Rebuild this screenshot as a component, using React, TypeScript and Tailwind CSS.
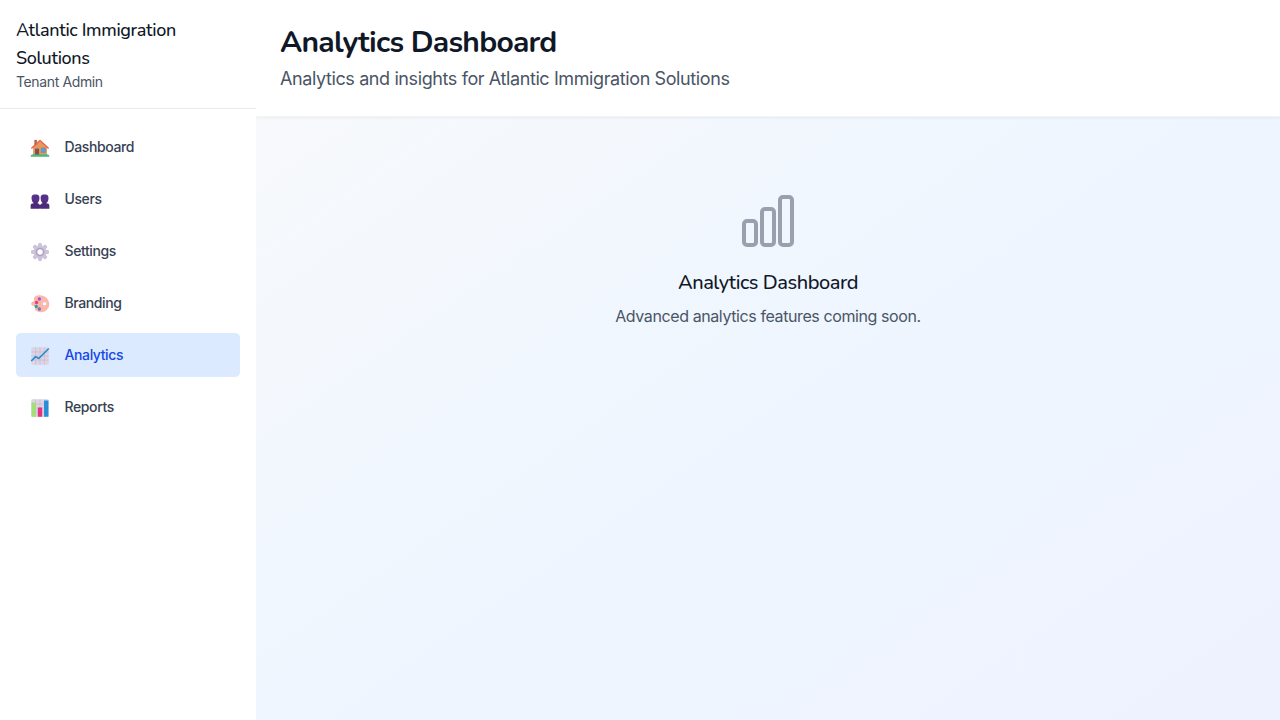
import type { ReactNode } from "react";

const HEADING = "font-['Nunito',sans-serif]";

function Emoji({ children }: { children: ReactNode }) {
  return (
    <svg viewBox="0 0 32 32" className="mt-px h-5 w-5 shrink-0" aria-hidden="true">
      {children}
    </svg>
  );
}

function House() {
  return (
    <Emoji>
      <rect x="7" y="3" width="4" height="9" fill="#a56953" />
      <path d="M5 15 16 5l11 10v14H5Z" fill="#dd9a62" />
      <path d="M3 16 16 4l13 12" fill="none" stroke="#ef5f40" strokeWidth="2.500" strokeLinecap="round" strokeLinejoin="round" />
      <rect x="18" y="16" width="7" height="7" fill="#3fa6ef" stroke="#b7795b" />
      <path d="M1 30c0-3 2-4 4-4h22c2 0 4 1 4 4Z" fill="#48ba83" />
      <rect x="8" y="17" width="6.5" height="9.500" fill="#85514c" />
    </Emoji>
  );
}

function People() {
  return (
    <Emoji>
      <path d="M1 30v-5c0-3 2-4 5-4h5c3 0 4.500 1 4.500 4v5ZM16.500 30v-5c0-3 2-4 4.500-4h5c3 0 5 1 5 4v5Z" fill="#4b2a7a" />
      <path d="M2.500 13c0-5 2-6 6.300-6s6.300 1 6.300 6-2 8-6.300 8-6.300-3-6.300-8ZM17 13c0-5 2-6 6.300-6s6.300 1 6.300 6-2 8-6.300 8S17 18 17 13Z" fill="#56318a" />
      <path d="M6 18h6v5H6ZM20 18h6v5h-6ZM13 24h6v5h-6Z" fill="#4b2a7a" />
    </Emoji>
  );
}

function Gear() {
  const teeth = [0, 45, 90, 135, 180, 225, 270, 315];
  return (
    <Emoji>
      <g fill="#cdc4db">
        {teeth.map((angle) => (
          <path key={angle} d="m12.500 7 .7-5q2.800-1 5.600 0l.7 5Z" transform={`rotate(${angle} 16 16)`} />
        ))}
        <circle cx="16" cy="16" r="10.500" />
      </g>
      <circle cx="16" cy="16" r="5.700" fill="#fff" stroke="#ada1c2" strokeWidth="2.600" />
    </Emoji>
  );
}

function Palette() {
  return (
    <Emoji>
      <path d="M7 5C13 0 23 2 28 8c4 6 4 13-1 17-3 3-6 4-10 4-4 0-8-2-10-5 3-1 2-4 0-5-3 0-5-1-5-3 0-2 1-4 3-4 3 0 0-4 2-7Z" fill="#f8b9aa" />
      <rect x="20.500" y="13" width="5.500" height="5" rx="2" fill="#fff" />
      <circle cx="15" cy="8" r="2.700" fill="#ac50dc" />
      <circle cx="10.500" cy="13.500" r="2.700" fill="#e83d78" />
      <circle cx="10" cy="20" r="2.700" fill="#26a69b" />
      <circle cx="15" cy="24" r="2.700" fill="#746bd5" />
    </Emoji>
  );
}

function ChartPaper() {
  return (
    <>
      <rect x="2" y="2" width="28" height="28" rx="2" fill="#ddd4e4" />
      <path d="M2 9.500h28M2 16h28M2 22.500h28M9 2v28M16 2v28M23 2v28" stroke="#c4b8d1" strokeWidth="1" />
    </>
  );
}

function TrendChart() {
  return (
    <Emoji>
      <ChartPaper />
      <path d="m2 24 7-7 5 3L30 4" fill="none" stroke="#238bd5" strokeWidth="2.600" strokeLinejoin="round" />
    </Emoji>
  );
}

function BarChart() {
  return (
    <Emoji>
      <ChartPaper />
      <rect x="2.500" y="7" width="7" height="23" rx=".5" fill="#a3df76" />
      <rect x="12.500" y="15" width="7" height="15" rx=".5" fill="#df357e" />
      <rect x="22.500" y="4" width="7" height="26" rx=".5" fill="#268ed9" />
    </Emoji>
  );
}

const NAV = [
  { label: "Dashboard", icon: <House /> },
  { label: "Users", icon: <People /> },
  { label: "Settings", icon: <Gear /> },
  { label: "Branding", icon: <Palette /> },
  { label: "Analytics", icon: <TrendChart />, active: true },
  { label: "Reports", icon: <BarChart /> },
];

export default function App() {
  return (
    <div className="flex h-screen overflow-hidden bg-white font-['Inter',sans-serif] text-gray-900">
      <aside className="z-20 w-64 shrink-0 bg-white">
        <div className="border-b border-[#e9eaec] p-4">
          <h2 className={`${HEADING} text-lg leading-7 font-[550] tracking-[-0.34px] text-gray-900`}>
            Atlantic Immigration Solutions
          </h2>
          <p className="text-sm tracking-[-0.37px] text-gray-600">Tenant Admin</p>
        </div>
        <nav className="flex flex-col gap-2 p-4">
          {NAV.map((item) => (
            <a
              key={item.label}
              className={`flex h-11 items-center gap-[14.5px] rounded-[5px] pl-3.5 text-sm font-[450] tracking-[-0.39px] ${
                item.active ? "bg-blue-100 text-blue-700" : "text-gray-700"
              }`}
            >
              {item.icon}
              <span>{item.label}</span>
            </a>
          ))}
        </nav>
      </aside>
      <div className="flex min-w-0 flex-1 flex-col bg-linear-to-br/srgb from-[#f9fafb] via-blue-50 to-indigo-50">
        <header className="z-10 border-b border-gray-100 bg-white px-6 pt-[25px] pb-[23px] shadow-[0_1px_3px_rgb(0_0_0/0.06)]">
          <h1 className={`${HEADING} text-[30px] leading-9 font-bold tracking-[-0.75px] text-gray-900`}>Analytics Dashboard</h1>
          <p className="mt-1 text-lg leading-7 tracking-[-0.395px] text-gray-600">
            Analytics and insights for Atlantic Immigration Solutions
          </p>
        </header>
        <main className="flex-1 p-6">
          <section className="py-12 text-center">
            <svg viewBox="0 0 24 24" fill="none" stroke="currentColor" strokeWidth="1.500" className="mx-auto mb-4 h-16 w-16 text-gray-400">
              <rect x="3" y="12" width="4.500" height="9" rx="1.125" />
              <rect x="9.750" y="7.500" width="4.500" height="13.500" rx="1.125" />
              <rect x="16.500" y="3" width="4.500" height="18" rx="1.125" />
            </svg>
            <h3 className={`${HEADING} mb-[7px] text-xl leading-7 font-[550] tracking-[-0.44px] text-gray-900`}>Analytics Dashboard</h3>
            <p className="text-base tracking-[-0.4px] text-gray-600">Advanced analytics features coming soon.</p>
          </section>
        </main>
      </div>
    </div>
  );
}
